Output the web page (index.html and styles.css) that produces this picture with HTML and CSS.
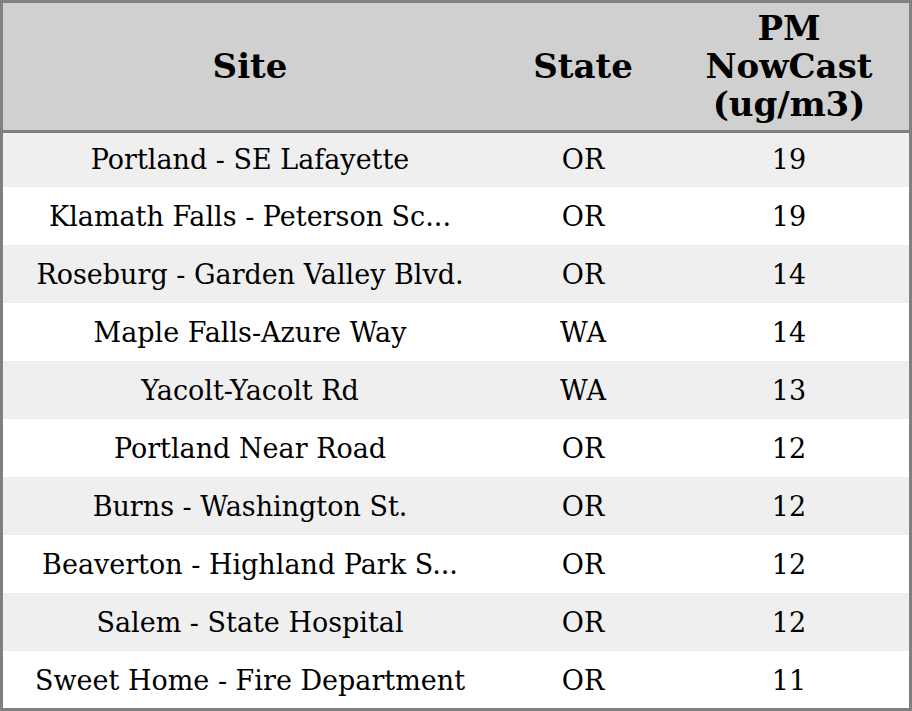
FILE: index.html
```html
<!DOCTYPE html>
<html>
<head>
<meta charset="utf-8">
<link rel="stylesheet" href="styles.css">
</head>
<body>
<div class="frame">
<table class="grid">
<thead>
<tr><th class="c-site">Site</th><th class="c-state">State</th><th class="c-pm">PM<br>NowCast<br>(ug/m3)</th></tr>
</thead>
<tbody>
<tr><td>Portland - SE Lafayette</td><td>OR</td><td>19</td></tr>
<tr><td>Klamath Falls - Peterson Sc...</td><td>OR</td><td>19</td></tr>
<tr><td>Roseburg - Garden Valley Blvd.</td><td>OR</td><td>14</td></tr>
<tr><td>Maple Falls-Azure Way</td><td>WA</td><td>14</td></tr>
<tr><td>Yacolt-Yacolt Rd</td><td>WA</td><td>13</td></tr>
<tr><td>Portland Near Road</td><td>OR</td><td>12</td></tr>
<tr><td>Burns - Washington St.</td><td>OR</td><td>12</td></tr>
<tr><td>Beaverton - Highland Park S...</td><td>OR</td><td>12</td></tr>
<tr><td>Salem - State Hospital</td><td>OR</td><td>12</td></tr>
<tr><td>Sweet Home - Fire Department</td><td>OR</td><td>11</td></tr>
</tbody>
</table>
</div>
</body>
</html>
```
FILE: styles.css
```css
html, body {
  margin: 0;
  padding: 0;
  background: #ffffff;
}
.frame {
  width: 912px;
  height: 711px;
  box-sizing: border-box;
  border: 3px solid #808080;
  overflow: hidden;
}
.grid {
  width: 906px;
  border-collapse: collapse;
  table-layout: fixed;
  font-family: "DejaVu Serif", serif;
  color: #000;
}
.grid th {
  background: #d0d0d0;
  font-size: 34px;
  font-weight: bold;
  line-height: 38px;
  height: 128px;
  padding: 0;
  border-bottom: 3px solid #808080;
  text-align: center;
  vertical-align: middle;
  box-sizing: border-box;
}
.c-site { width: 494px; }
.c-state { width: 172px; }
.c-pm { width: 240px; }
.grid tbody tr { height: 58px; }
.grid tbody tr:first-child { height: 56px; }
.grid td {
  font-size: 27px;
  padding: 0;
  text-align: center;
  vertical-align: middle;
  white-space: nowrap;
}
.grid tbody tr:nth-child(odd) td {
  background: #efefef;
}
```
